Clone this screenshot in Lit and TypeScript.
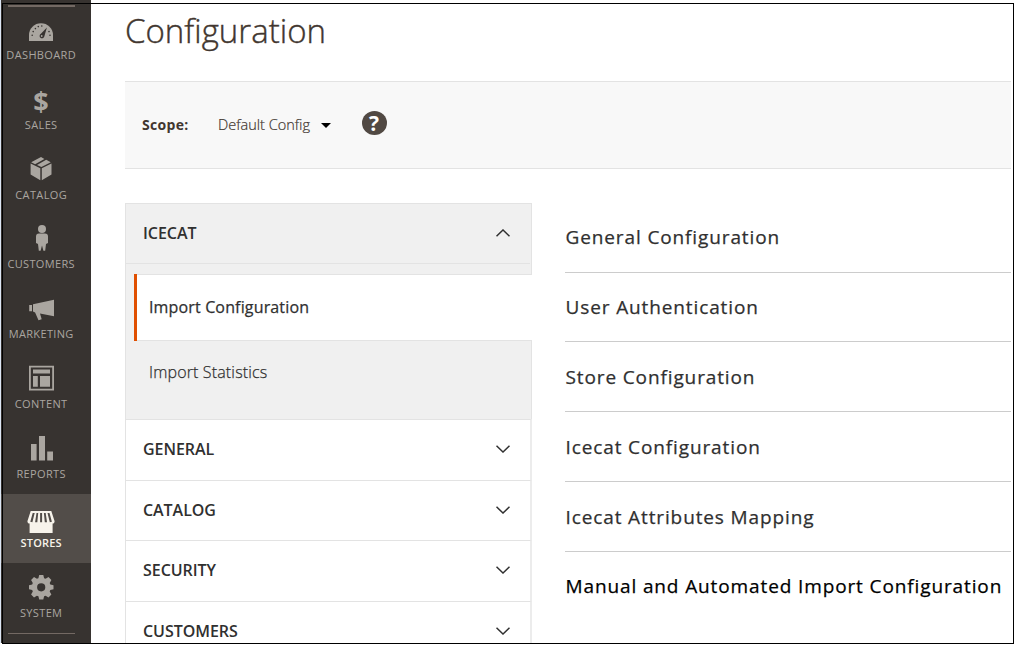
import { LitElement, html, css, svg } from "lit";
import { customElement, property } from "lit/decorators.js";
import { classMap } from "lit/directives/class-map.js";

// All menu glyphs share a 30x30 box.
const icons: Record<string, unknown> = {
  dashboard: svg`<path d="M3 27V21a12 11.8 0 0 1 24 0v6z"/><g fill="#373330"><circle cx="6.2" cy="21.2" r=".8"/><circle cx="7.2" cy="17.6" r=".8"/><circle cx="9.4" cy="14.6" r=".8"/><circle cx="12.3" cy="12.6" r=".8"/><circle cx="15.8" cy="12" r=".8"/><circle cx="23" cy="17.6" r=".8"/><circle cx="24" cy="21.2" r=".8"/><path d="M20.9 13.4l-2.6 9.2a2.4 2.4 0 1 1-3.4-2.8z"/></g><circle cx="15.7" cy="22" r=".9"/>`,
  catalog: svg`<path d="M15 3l3.4 1.9-9.3 5.3-3.9-2zM20.2 5.7l4.6 2.5L15.4 13l-4.4-1.9zM4.6 9.6l9.7 4.6v12L4.6 20.6zM25.5 9.6v11l-9.7 5.6v-12z"/>`,
  customers: svg`<circle cx="16" cy="5" r="4"/><path d="M13 9.6h6c2 0 3 1.2 3 3v6.3l-2 1-.8 6.8h-1.8L16 21.6l-1.4 5.1h-1.8L12 20l-2-1v-6.4c0-1.8 1-3 3-3z"/>`,
  marketing: svg`<path d="M3.2 12H6v6.2H3.2zM7 11.3L28 6.8v16.4l-14-2.8 1.7 5.8-3.2 1-3.4-7.7L7 18.6z"/>`,
  content: svg`<path fill-rule="evenodd" d="M3 2.7h25v24.8H3zM4.8 4.5v21.2h21.4V4.5z"/><path d="M7 6.4h17v4H7zM7 13h4.8v10.8H7zM14 13h10v10.8H14z"/>`,
  reports: svg`<path d="M5 11h5.6v16.4H5zM13 3h6v24.4h-6zM21.2 18.4h5.8v9h-5.8z"/>`,
  stores: svg`<path fill-rule="evenodd" d="M4.7 8h20.6l3.3 10.2c0 1.6-.9 2.4-2 2.4V30H3.6v-9.4c-1.2 0-2.2-.8-2.2-2.4zM6.7 10l-2.4 8.7 2.1.6L8.7 10zM10.5 10l-1.4 9.3h2.2L12.2 10zM14.1 10v9.3h2V10zM17.9 10l.9 9.3H21L19.7 10zM21.5 10l2.3 9.3 2.1-.6L23.5 10z"/>`,
  system: svg`<path fill-rule="evenodd" d="M13.2 2h4.1l.8 3.2 1.5.6 2.9-1.7 2.9 2.9-1.7 2.9.6 1.5 3.2.8v4.1l-3.2.8-.6 1.5 1.7 2.9-2.9 2.9-2.9-1.7-1.5.6-.8 3.2h-4.1l-.8-3.2-1.5-.6L8 24.4l-2.9-2.9 1.7-2.9-.6-1.5-3.2-.8v-4.1l3.2-.8.6-1.5L5.1 7 8 4.1l2.9 1.7 1.5-.6zM15.2 10.2a4.1 4.1 0 1 0 0 8.2 4.1 4.1 0 0 0 0-8.2z"/>`,
};

const menu = ["Dashboard", "Sales", "Catalog", "Customers", "Marketing", "Content", "Reports", "Stores", "System"];
const sections = ["General", "Catalog", "Security", "Customers"];
const groups = [
  "General Configuration",
  "User Authentication",
  "Store Configuration",
  "Icecat Configuration",
  "Icecat Attributes Mapping",
  "Manual and Automated Import Configuration",
];

@customElement("side-menu")
class SideMenu extends LitElement {
  static styles = css`
    :host {
      display: block;
      box-sizing: border-box;
      width: 90px;
      flex: none;
      background: #373330;
      color: #aaa6a0;
      overflow: hidden;
    }
    .rule { height: 2px; width: 67px; margin: 5px 0 -1.6px 7px; background: #736963; }
    .rule.end { height: 1px; margin: 0 0 0 7px; }
    .item {
      height: 69.75px;
      box-sizing: border-box;
      padding: 9px 10px 0 0;
      display: flex;
      flex-direction: column;
      align-items: center;
    }
    .item.active { background: #524d49; color: #f7f3eb; }
    .icon { width: 30px; height: 30px; fill: currentColor; display: block; flex: none; }
    .system { padding-top: 9.6px; }
    .system .label { margin-top: 2px; }
    .dollar {
      height: 30px;
      font: bold 27px/33px "Open Sans", sans-serif;
    }
    .label { font-size: 11px; letter-spacing: 0.35px; margin-right: -0.35px; line-height: 16px; margin-top: 2.7px; text-transform: uppercase; white-space: nowrap; }
    .active .label { font-weight: 600; letter-spacing: 0.2px; }
  `;
  render() {
    return html`
      <div class="rule"></div>
      ${menu.map((name) => {
        const key = name.toLowerCase();
        return html`<div class=${classMap({ item: true, system: key === "system", active: key === "stores" })}>
          ${key === "sales"
            ? html`<span class="dollar">$</span>`
            : html`<svg class="icon" viewBox="0 0 30 30">${icons[key]}</svg>`}
          <span class="label">${name}</span>
        </div>`;
      })}
      <div class="rule end"></div>
    `;
  }
}

@customElement("chevron-icon")
class ChevronIcon extends LitElement {
  @property({ type: Boolean }) up = false;
  static styles = css`
    :host { display: block; width: 14px; height: 8px; }
    .svg { display: block; fill: none; stroke: #303030; stroke-width: 1.5; }
  `;
  render() {
    return html`<svg class="svg" width="14" height="8" viewBox="0 0 14 8">
      <path d=${this.up ? "M.5 7.2L7 1l6.5 6.2" : "M.5.8L7 7l6.5-6.2"} />
    </svg>`;
  }
}

@customElement("app-root")
class AppRoot extends LitElement {
  static styles = css`
    :host {
      display: block;
      position: relative;
      width: 1019px;
      height: 648px;
      overflow: hidden;
      background: #fff;
      font-family: "Open Sans", "Noto Sans", sans-serif;
      color: #303030;
    }
    .edge { width: 1px; background: #dce6f4; flex: none; }
    .shell { display: flex; height: 643px; overflow: hidden; }
    .frame {
      position: absolute;
      left: 2px; top: 3px;
      width: 1012px; height: 641px;
      box-sizing: border-box;
      border: 1px solid #000;
      pointer-events: none;
    }
    .page { width: 886px; margin-left: 34px; flex: none; }
    .title {
      margin: 0;
      height: 81px;
      padding-top: 8px;
      box-sizing: border-box;
      font-size: 33px;
      line-height: 46px;
      font-weight: 300;
      -webkit-text-stroke: 0.4px #41362f;
      color: #41362f;
      white-space: nowrap;
    }
    .scope {
      height: 88px;
      box-sizing: border-box;
      border-top: 1px solid #e3e3e3;
      border-bottom: 1px solid #e3e3e3;
      background: #f8f8f8;
      display: flex;
      align-items: center;
      padding: 0 0 2px 17px;
      font-size: 14px;
      color: #41362f;
    }
    .scope-label { font-weight: 700; width: 76px; letter-spacing: 0.3px; }
    .scope-value { width: 102.5px; font-weight: 300; font-size: 14.5px; -webkit-text-stroke: 0.2px #41362f; white-space: nowrap; }
    .caret { border: 5px solid transparent; border-top-color: #000; border-bottom: 0; margin-top: 3px; }
    .help {
      margin: -2px 0 0 31px;
      width: 25px; height: 24px;
      border-radius: 50%;
      background: #514943;
      color: #fff;
      font: bold 21px/24px "Open Sans", sans-serif;
      text-align: center;
    }
    .columns { display: flex; margin-top: 34px; }
    .nav { width: 407px; flex: none; }
    .open {
      height: 216px;
      box-sizing: border-box;
      background: #f0f0f0;
      border: 1px solid #e3e3e3;
      border-bottom: 0;
    }
    .head {
      display: flex;
      align-items: center;
      justify-content: space-between;
      box-sizing: border-box;
      padding: 0 21px 0 17px;
      font-size: 16px;
      letter-spacing: -0.05px;
      font-weight: 600;
      text-transform: uppercase;
    }
    .open .head { height: 60px; border-bottom: 1px solid #e3e3e3; margin-right: 1px; padding-right: 20px; padding-bottom: 2px; }
    .sub { display: flex; align-items: center; font-size: 16px; }
    .current {
      height: 67px;
      box-sizing: border-box;
      margin: 10px -1px 0 8px;
      border-left: 3px solid #e04f00;
      background: #fff;
    }
    .current-inner {
      flex: 1;
      height: 67px;
      box-sizing: border-box;
      border: solid #e3e3e3;
      border-width: 1px 0;
      padding-left: 12px;
      line-height: 64px;
      letter-spacing: 0.15px;
      -webkit-text-stroke: 0.25px #303030;
    }
    .other { height: 62px; padding-left: 23px; font-weight: 300; letter-spacing: 0.15px; -webkit-text-stroke: 0.25px #303030; }
    .closed { border: solid #e3e3e3; border-width: 1px 2px 0 1px; border-right-color: #ececec; }
    .closed .head { height: 59.6px; padding-right: 20px; padding-bottom: 2px; }
    .closed:nth-child(3) .head { padding-bottom: 0.4px; }
    .groups {
      display: grid;
      grid-template-rows: 70px 69px 70px 70px 70px 70px;
      width: 446px;
      margin-left: 33px;
    }
    .group {
      box-sizing: border-box;
      border-bottom: 1px solid #ccc;
      padding-left: 0.5px;
      font-size: 19px;
      line-height: 68px;
      letter-spacing: 0.88px;
      -webkit-text-stroke: 0.25px #303030;
      white-space: nowrap;
    }
    .group.low { padding-top: 1px; }
    .group.last { border: 0; color: #000; -webkit-text-stroke-color: #000; }
  `;
  render() {
    return html`
      <div class="shell">
        <div class="edge"></div>
        <side-menu></side-menu>
        <main class="page">
          <h1 class="title">Configuration</h1>
          <div class="scope">
            <span class="scope-label">Scope:</span>
            <span class="scope-value">Default Config</span>
            <span class="caret"></span>
            <span class="help">?</span>
          </div>
          <div class="columns">
            <nav class="nav">
              <div class="open">
                <div class="head"><span>Icecat</span><chevron-icon up></chevron-icon></div>
                <div class="sub current"><div class="current-inner">Import Configuration</div></div>
                <div class="sub other">Import Statistics</div>
              </div>
              ${sections.map(
                (s) => html`<div class="closed"><div class="head"><span>${s}</span><chevron-icon></chevron-icon></div></div>`,
              )}
            </nav>
            <div class="groups">
              ${groups.map(
                (g, i) =>
                  html`<div class=${classMap({ group: true, low: i >= 2 && i <= 4, last: i === groups.length - 1 })}>${g}</div>`,
              )}
            </div>
          </div>
        </main>
      </div>
      <div class="frame"></div>
    `;
  }
}
